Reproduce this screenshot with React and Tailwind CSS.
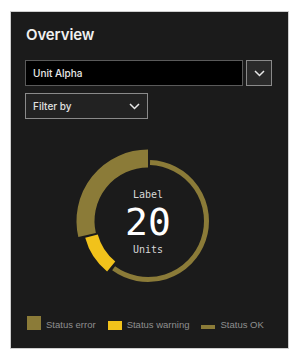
import React from "react";

const C = 80;
function pt(r, a) {
  const rad = ((a - 90) * Math.PI) / 180;
  return [C + r * Math.cos(rad), C + r * Math.sin(rad)];
}
function arc(r, a1, a2) {
  const [x1, y1] = pt(r, a1);
  const [x2, y2] = pt(r, a2);
  const large = a2 - a1 > 180 ? 1 : 0;
  return `M ${x1} ${y1} A ${r} ${r} 0 ${large} 1 ${x2} ${y2}`;
}

function Chevron() {
  return (
    <svg width="11" height="7" viewBox="0 0 11 7">
      <path d="M1 1 L5.5 5.5 L10 1" fill="none" stroke="#e8e8e8" strokeWidth="1.5" />
    </svg>
  );
}

export default function App() {
  const font = { fontFamily: "Inter, 'Noto Sans', sans-serif" };
  const mono = { fontFamily: "'DejaVu Sans Mono', 'Liberation Mono', monospace" };
  const legend = { fontFamily: "'Liberation Sans', Arial, sans-serif" };
  return (
    <div className="w-[300px] h-[360px] bg-white pt-[12px] pl-[11px]" style={font}>
      <div className="w-[277px] h-[336px] bg-[#1b1b1b] shadow-[0_0_0_1px_#cfcfcf] flex flex-col pl-[14px] pr-[16px]">
        <div className="pt-[13px] pl-[1px] text-[15px] leading-[20px] font-semibold text-[#f0f0f0] tracking-[-0.1px]">
          Overview
        </div>
        <div className="mt-[15px] flex gap-[3px]">
          <div className="w-[218px] h-[26px] bg-black border border-[#5a5a5a] flex items-center pl-[7px] text-[10px] font-medium text-[#e8e8e8]">
            Unit Alpha
          </div>
          <div className="w-[26px] h-[26px] bg-[#2a2a2a] border border-[#8a8a8a] flex items-center justify-center">
            <Chevron />
          </div>
        </div>
        <div className="mt-[7px] w-[123px] h-[26px] bg-[#222222] border border-[#8a8a8a] flex items-center justify-between pl-[7px] pr-[7px] text-[10px] font-medium text-[#e0e0e0]">
          <span>Filter by</span>
          <Chevron />
        </div>
        <div className="mt-[22px] ml-[43px] relative w-[160px] h-[160px]">
          <svg width="160" height="160" viewBox="0 0 160 160">
            <path d={arc(58.5, 2, 216)} fill="none" stroke="#8b7b38" strokeWidth="5" />
            <path d={arc(58.5, 219, 255)} fill="none" stroke="#f1c21b" strokeWidth="13" />
            <path d={arc(62.5, 257, 360)} fill="none" stroke="#8b7b38" strokeWidth="18" />
          </svg>
          <div className="absolute inset-0 flex flex-col items-center" style={mono}>
            <div className="mt-[48px] text-[10px] leading-[12px] text-[#d8d8d8]">Label</div>
            <div className="mt-[0px] text-[38px] leading-[42px] font-light text-white">20</div>
            <div className="mt-[1px] text-[10px] leading-[12px] text-[#d8d8d8]">Units</div>
          </div>
        </div>
        <div className="mt-[15px] flex items-end whitespace-nowrap text-[9.5px] leading-[11px] text-[#8f8f8f]" style={legend}>
          <div className="flex items-end ml-[2px]">
            <div className="w-[14px] h-[14px] bg-[#8b7b38] shrink-0" />
            <span className="ml-[5px]">Status error</span>
          </div>
          <div className="flex items-end ml-[12px]">
            <div className="w-[14px] h-[9px] bg-[#f1c21b] shrink-0" />
            <span className="ml-[5px]">Status warning</span>
          </div>
          <div className="flex items-end ml-[12px]">
            <div className="w-[14px] h-[4px] bg-[#8b7b38] mb-[1px] shrink-0" />
            <span className="ml-[5px]">Status OK</span>
          </div>
        </div>
      </div>
    </div>
  );
}
